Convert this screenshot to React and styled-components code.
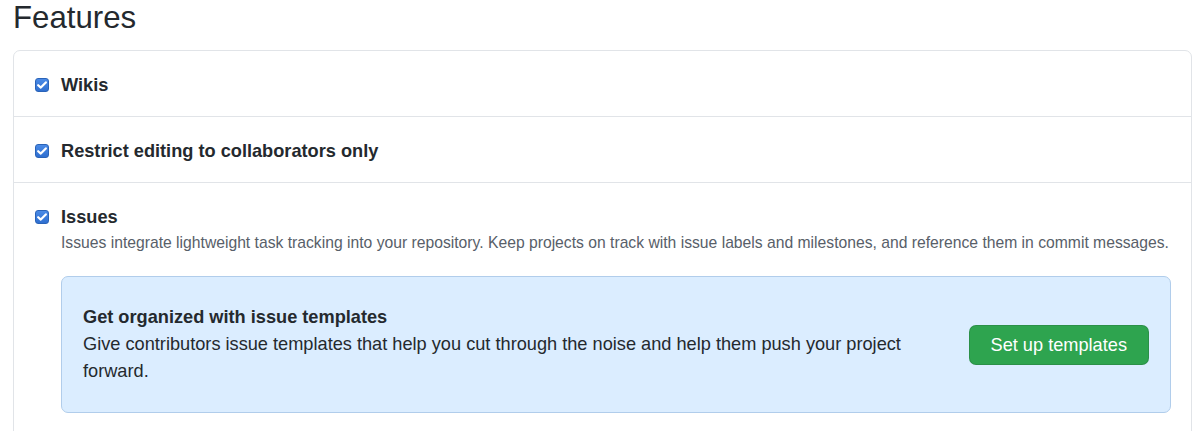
import React from 'react';
import styled, { createGlobalStyle } from 'styled-components';

const GlobalStyle = createGlobalStyle`
  body {
    margin: 0;
    background: #fff;
    font-family: 'Liberation Sans', Arial, sans-serif;
    color: #24292e;
  }
`;

const Page = styled.div`
  padding: 0 6px 0 13px;
`;

const Heading = styled.h2`
  margin: 0 0 15px 0;
  font-size: 31.2px;
  font-weight: 400;
  line-height: 35px;
`;

const Box = styled.div`
  border: 1px solid #e1e4e8;
  border-radius: 7px;
`;

const Row = styled.div`
  padding: 22px 20px ${(p) => (p.last ? '30px' : '18px')} 20px;
  border-top: ${(p) => (p.first ? 'none' : '1px solid #e1e4e8')};
`;

const Label = styled.label`
  display: flex;
  align-items: flex-start;
  gap: 12px;
  font-size: 18.2px;
  font-weight: 700;
  line-height: 25px;
`;

const Check = styled.span`
  flex: none;
  width: 14px;
  height: 14px;
  margin: 5px 0 0 1px;
  border-radius: 3px;
  background: linear-gradient(#4a8ae6, #2f6fd0);
  border: 1px solid #2a63b8;
  box-sizing: border-box;
  display: flex;
  align-items: center;
  justify-content: center;
`;

const Body = styled.div`
  padding-left: 27px;
`;

const Note = styled.p`
  margin: 1px 0 0 0;
  font-size: 15.7px;
  line-height: 23px;
  color: #586069;
`;

const Flash = styled.div`
  margin-top: 22px;
  display: flex;
  align-items: center;
  gap: 24px;
  padding: 27px 21px 27px 21px;
  background: #dbedff;
  border: 1px solid #b1cdeb;
  border-radius: 7px;
  color: #24292e;
`;

const FlashText = styled.div`
  flex: 1;
  font-size: 18.2px;
  line-height: 27px;
`;

const FlashTitle = styled.div`
  font-weight: 700;
`;

const Button = styled.button`
  flex: none;
  font-family: inherit;
  font-size: 18.2px;
  line-height: 26px;
  padding: 6px 21px;
  color: #fff;
  background: #2ea44f;
  border: 1px solid rgba(27, 31, 35, 0.15);
  border-radius: 7px;
`;

const Checkbox = () => (
  <Check>
    <svg width="10" height="8" viewBox="0 0 10 8">
      <path d="M1.2 4.2 L3.8 6.6 L8.8 1.4" fill="none" stroke="#fff" strokeWidth="2.2" strokeLinecap="round" strokeLinejoin="round" />
    </svg>
  </Check>
);

const Feature = ({ first, last, title, children }) => (
  <Row first={first} last={last}>
    <Label>
      <Checkbox />
      {title}
    </Label>
    {children && <Body>{children}</Body>}
  </Row>
);

export default function App() {
  return (
    <Page>
      <GlobalStyle />
      <Heading>Features</Heading>
      <Box>
        <Feature first title="Wikis" />
        <Feature title="Restrict editing to collaborators only" />
        <Feature last title="Issues">
          <Note>
            Issues integrate lightweight task tracking into your repository. Keep projects on track with issue labels and milestones, and reference them in commit messages.
          </Note>
          <Flash>
            <FlashText>
              <FlashTitle>Get organized with issue templates</FlashTitle>
              Give contributors issue templates that help you cut through the noise and help them push your project forward.
            </FlashText>
            <Button>Set up templates</Button>
          </Flash>
        </Feature>
      </Box>
    </Page>
  );
}
